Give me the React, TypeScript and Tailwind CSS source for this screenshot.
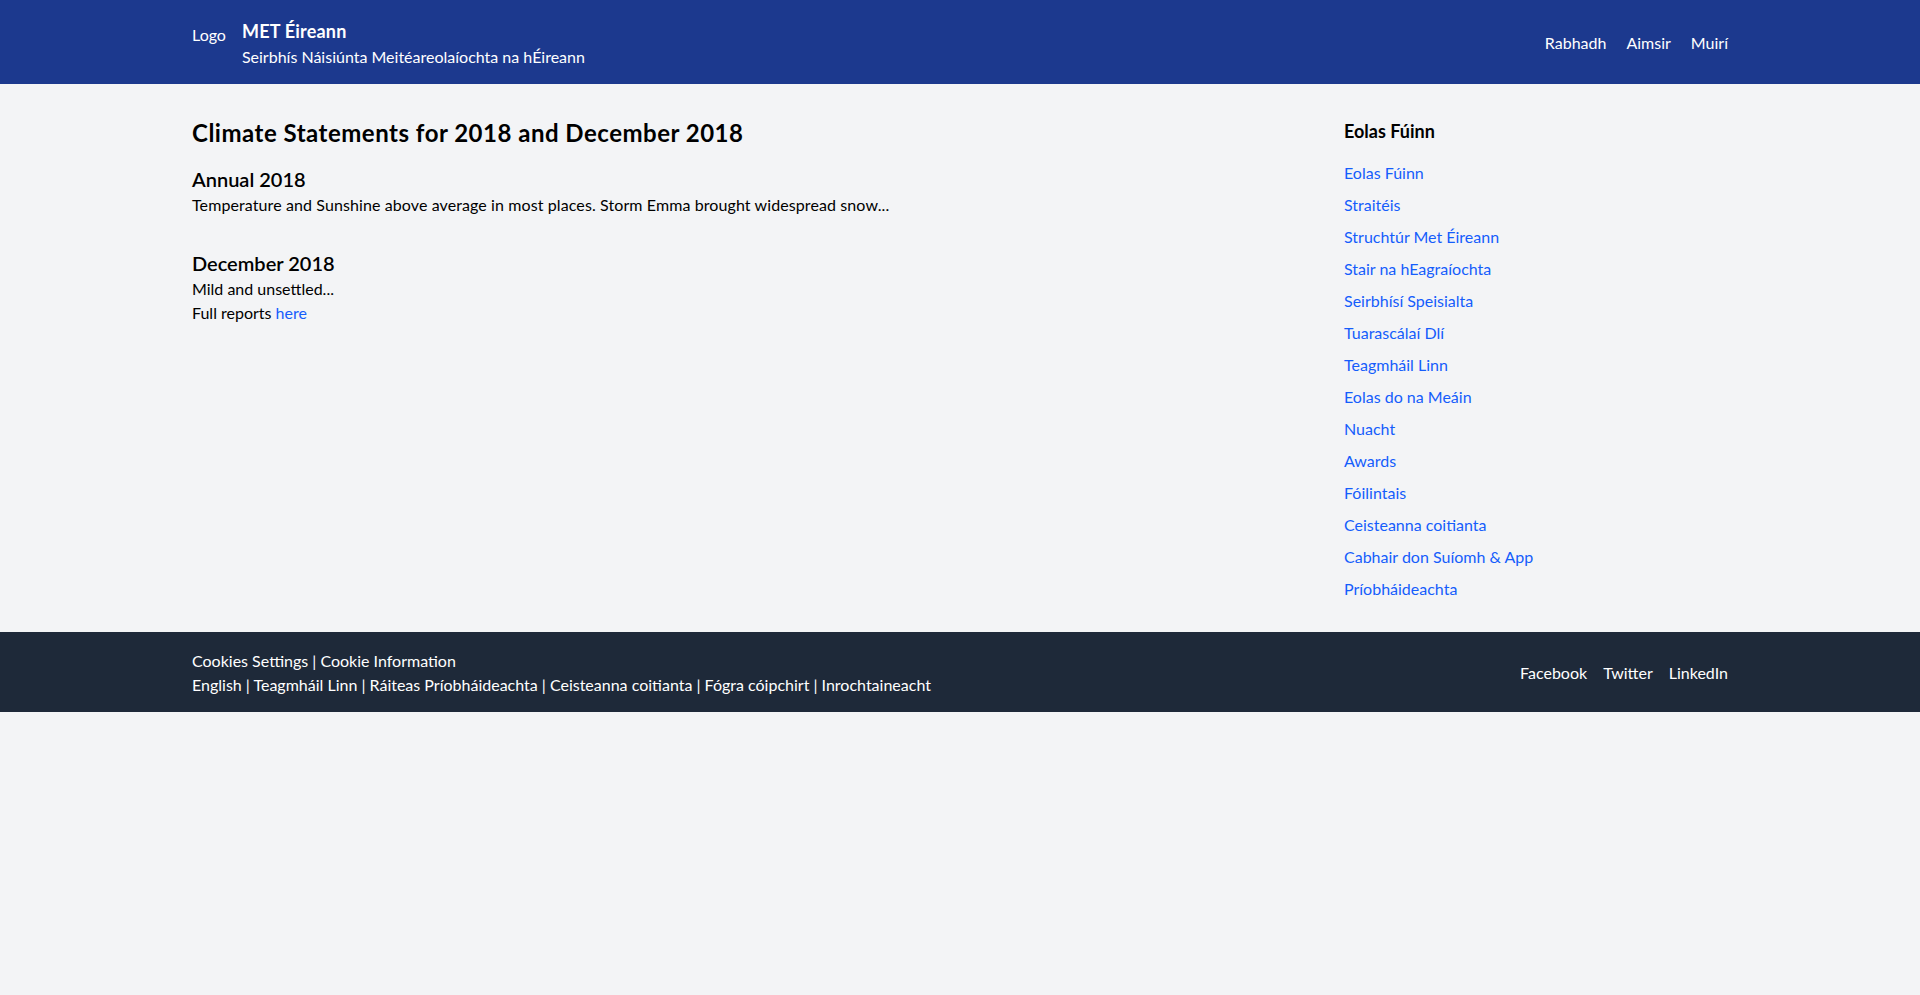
import React from 'react'

const aboutLinks = [
  'Eolas Fúinn',
  'Straitéis',
  'Struchtúr Met Éireann',
  'Stair na hEagraíochta',
  'Seirbhísí Speisialta',
  'Tuarascálaí Dlí',
  'Teagmháil Linn',
  'Eolas do na Meáin',
  'Nuacht',
  'Awards',
  'Fóilintais',
  'Ceisteanna coitianta',
  'Cabhair don Suíomh & App',
  'Príobháideachta',
]

const footerLinks = [
  'English',
  'Teagmháil Linn',
  'Ráiteas Príobháideachta',
  'Ceisteanna coitianta',
  'Fógra cóipchirt',
  'Inrochtaineacht',
]

export default function App() {
  return (
    <div className="min-h-screen bg-gray-100 text-black font-['Lato','Liberation_Sans',sans-serif]">
      {/* Header */}
      <header className="bg-blue-900 text-white">
        <div className="max-w-[1536px] mx-auto pt-[17px] pb-[15px] flex items-center justify-between">
          <div className="flex items-start">
            <span className="mt-[6px] mr-4">Logo</span>
            <div>
              <div className="text-lg font-bold tracking-[0.2px]">MET Éireann</div>
              <div>Seirbhís Náisiúnta Meitéareolaíochta na hÉireann</div>
            </div>
          </div>
          <nav className="flex space-x-5">
            <a href="#">Rabhadh</a>
            <a href="#">Aimsir</a>
            <a href="#">Muirí</a>
          </nav>
        </div>
      </header>

      {/* Content */}
      <div className="max-w-[1536px] mx-auto pt-[33px] pb-[31px] flex">
        <main className="flex-1">
          <h1 className="text-2xl font-bold tracking-[0.5px] mb-4">Climate Statements for 2018 and December 2018</h1>
          <section className="mb-8">
            <h2 className="text-xl font-semibold">Annual 2018</h2>
            <p className="tracking-[0.1px]">Temperature and Sunshine above average in most places. Storm Emma brought widespread snow...</p>
          </section>
          <section>
            <h2 className="text-xl font-semibold">December 2018</h2>
            <p>Mild and unsettled...</p>
            <p>
              Full reports <a href="#" className="text-blue-600">here</a>
            </p>
          </section>
        </main>

        <aside className="w-96">
          <h3 className="text-lg font-bold mb-4">Eolas Fúinn</h3>
          <ul className="space-y-2">
            {aboutLinks.map((l) => (
              <li key={l}>
                <a href="#" className="text-blue-600">{l}</a>
              </li>
            ))}
          </ul>
        </aside>
      </div>

      {/* Footer */}
      <footer className="bg-gray-800 text-white">
        <div className="max-w-[1536px] mx-auto pt-[17px] pb-[15px] flex items-center justify-between">
          <div>
            <div>Cookies Settings | Cookie Information</div>
            <div>{footerLinks.join(' | ')}</div>
          </div>
          <div className="flex space-x-4">
            <a href="#">Facebook</a>
            <a href="#">Twitter</a>
            <a href="#">LinkedIn</a>
          </div>
        </div>
      </footer>
    </div>
  )
}
